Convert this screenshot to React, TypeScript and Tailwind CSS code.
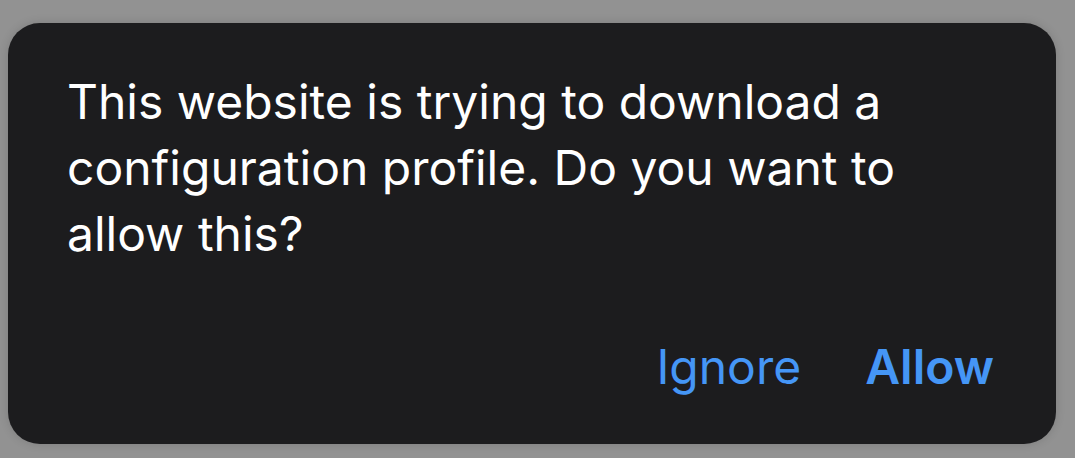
export default function App() {
  return (
    <div className="w-[1075px] h-[458px] bg-[#929292] pt-[23px] pl-[8px] overflow-hidden">
      <div
        className="w-[1048px] h-[421px] rounded-[32px] bg-[#1c1c1e] shadow-[0_0_10px_rgba(0,0,0,0.15)] pt-[46px] pl-[59px] pr-[62px] flex flex-col"
        style={{ fontFamily: "Inter, 'Noto Sans', sans-serif" }}
      >
        <p className="w-[890px] text-[48px] leading-[66px] text-white">
          This website is trying to download a configuration profile. Do you want to allow this?
        </p>
        <div className="mt-auto mb-[52px] flex justify-end gap-[64px] text-[48px] leading-[50px] text-[#4596f6]">
          <span>Ignore</span>
          <span className="font-semibold">Allow</span>
        </div>
      </div>
    </div>
  );
}
